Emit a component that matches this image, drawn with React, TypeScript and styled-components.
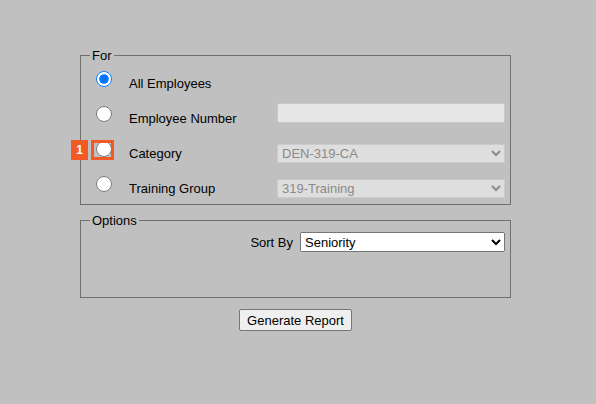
import styled, { createGlobalStyle } from "styled-components";

const GlobalStyle = createGlobalStyle`
  html, body {
    margin: 0;
    background: #c0c0c0;
    font-family: "Liberation Sans", Arial, sans-serif;
    font-size: 13px;
    color: #000;
  }
`;

const Page = styled.div`
  width: 431px;
  margin-left: 80px;
  padding-top: 48px;
`;

const Group = styled.fieldset<{ $top: number; $bottom: number }>`
  margin: 0 0 8px 0;
  padding: ${(p) => p.$top}px 5px ${(p) => p.$bottom}px 9px;
  border: 1px solid #707070;
  min-width: 0;
`;

const Legend = styled.legend`
  padding: 0 2px;
  line-height: 15px;
  font-size: 13px;
`;

const Rows = styled.div`
  display: grid;
  row-gap: 3px;
`;

const Row = styled.div`
  display: grid;
  grid-template-columns: 16px 1fr 228px;
  column-gap: 17px;
  align-items: center;
  height: 32px;
  padding-left: 6px;
`;

const RadioCell = styled.div`
  position: relative;
  width: 16px;
  height: 16px;
  margin-bottom: 9px;
`;

const Radio = styled.input.attrs({ type: "radio", name: "for" })`
  width: 16px;
  height: 16px;
  margin: 0;
  display: block;
`;

const Label = styled.span`
  font-size: 13px;
`;

const TextBox = styled.input`
  box-sizing: border-box;
  width: 228px;
  height: 20px;
  margin: 0 0 10px 0;
  background: #e6e6e6;
  border: 1px solid #c9c9c9;
  border-radius: 2px;
`;

const Select = styled.select<{ $width: number; $height: number }>`
  box-sizing: border-box;
  width: ${(p) => p.$width}px;
  height: ${(p) => p.$height}px;
  font-family: "Liberation Sans", Arial, sans-serif;
  font-size: 13px;
  margin: 0;
  &:disabled {
    background: #dedede;
    color: #8a8a8a;
    border: 1px solid #cbcbcb;
    opacity: 1;
  }
`;

const Outline = styled.div`
  position: absolute;
  left: -5px;
  top: -1px;
  width: 23px;
  height: 20px;
  box-sizing: border-box;
  border: 3px solid #f15a24;
  pointer-events: none;
`;

const Badge = styled.div`
  position: absolute;
  left: -25px;
  top: -1px;
  width: 17px;
  height: 20px;
  background: #f15a24;
  color: #fff;
  font-weight: bold;
  font-size: 12px;
  display: flex;
  align-items: center;
  justify-content: center;
`;

const SortRow = styled.div`
  display: flex;
  justify-content: flex-end;
  align-items: center;
  gap: 7px;
`;

const Actions = styled.div`
  display: flex;
  justify-content: center;
  padding-top: 3px;
`;

const Button = styled.button`
  height: 22px;
  padding: 0 7px;
  font-family: "Liberation Sans", Arial, sans-serif;
  font-size: 13px;
  background: #efefef;
  border: 1px solid #767676;
  border-radius: 2px;
  color: #000;
`;

const options = [
  { label: "All Employees", checked: true, marked: false },
  { label: "Employee Number", checked: false, marked: false },
  { label: "Category", checked: false, marked: true },
  { label: "Training Group", checked: false, marked: false },
];

export default function App() {
  return (
    <>
      <GlobalStyle />
      <Page>
        <Group $top={4} $bottom={0}>
          <Legend>For</Legend>
          <Rows>
            {options.map((o, i) => (
              <Row key={o.label}>
                <RadioCell>
                  <Radio defaultChecked={o.checked} />
                  {o.marked && (
                    <>
                      <Outline />
                      <Badge>1</Badge>
                    </>
                  )}
                </RadioCell>
                <Label>{o.label}</Label>
                {i === 0 && <span />}
                {i === 1 && <TextBox disabled />}
                {i === 2 && (
                  <Select $width={228} $height={19} disabled>
                    <option>DEN-319-CA</option>
                  </Select>
                )}
                {i === 3 && (
                  <Select $width={228} $height={19} disabled>
                    <option>319-Training</option>
                  </Select>
                )}
              </Row>
            ))}
          </Rows>
        </Group>
        <Group $top={4} $bottom={45}>
          <Legend>Options</Legend>
          <SortRow>
            <Label>Sort By</Label>
            <Select $width={205} $height={20}>
              <option>Seniority</option>
            </Select>
          </SortRow>
        </Group>
        <Actions>
          <Button>Generate Report</Button>
        </Actions>
      </Page>
    </>
  );
}
